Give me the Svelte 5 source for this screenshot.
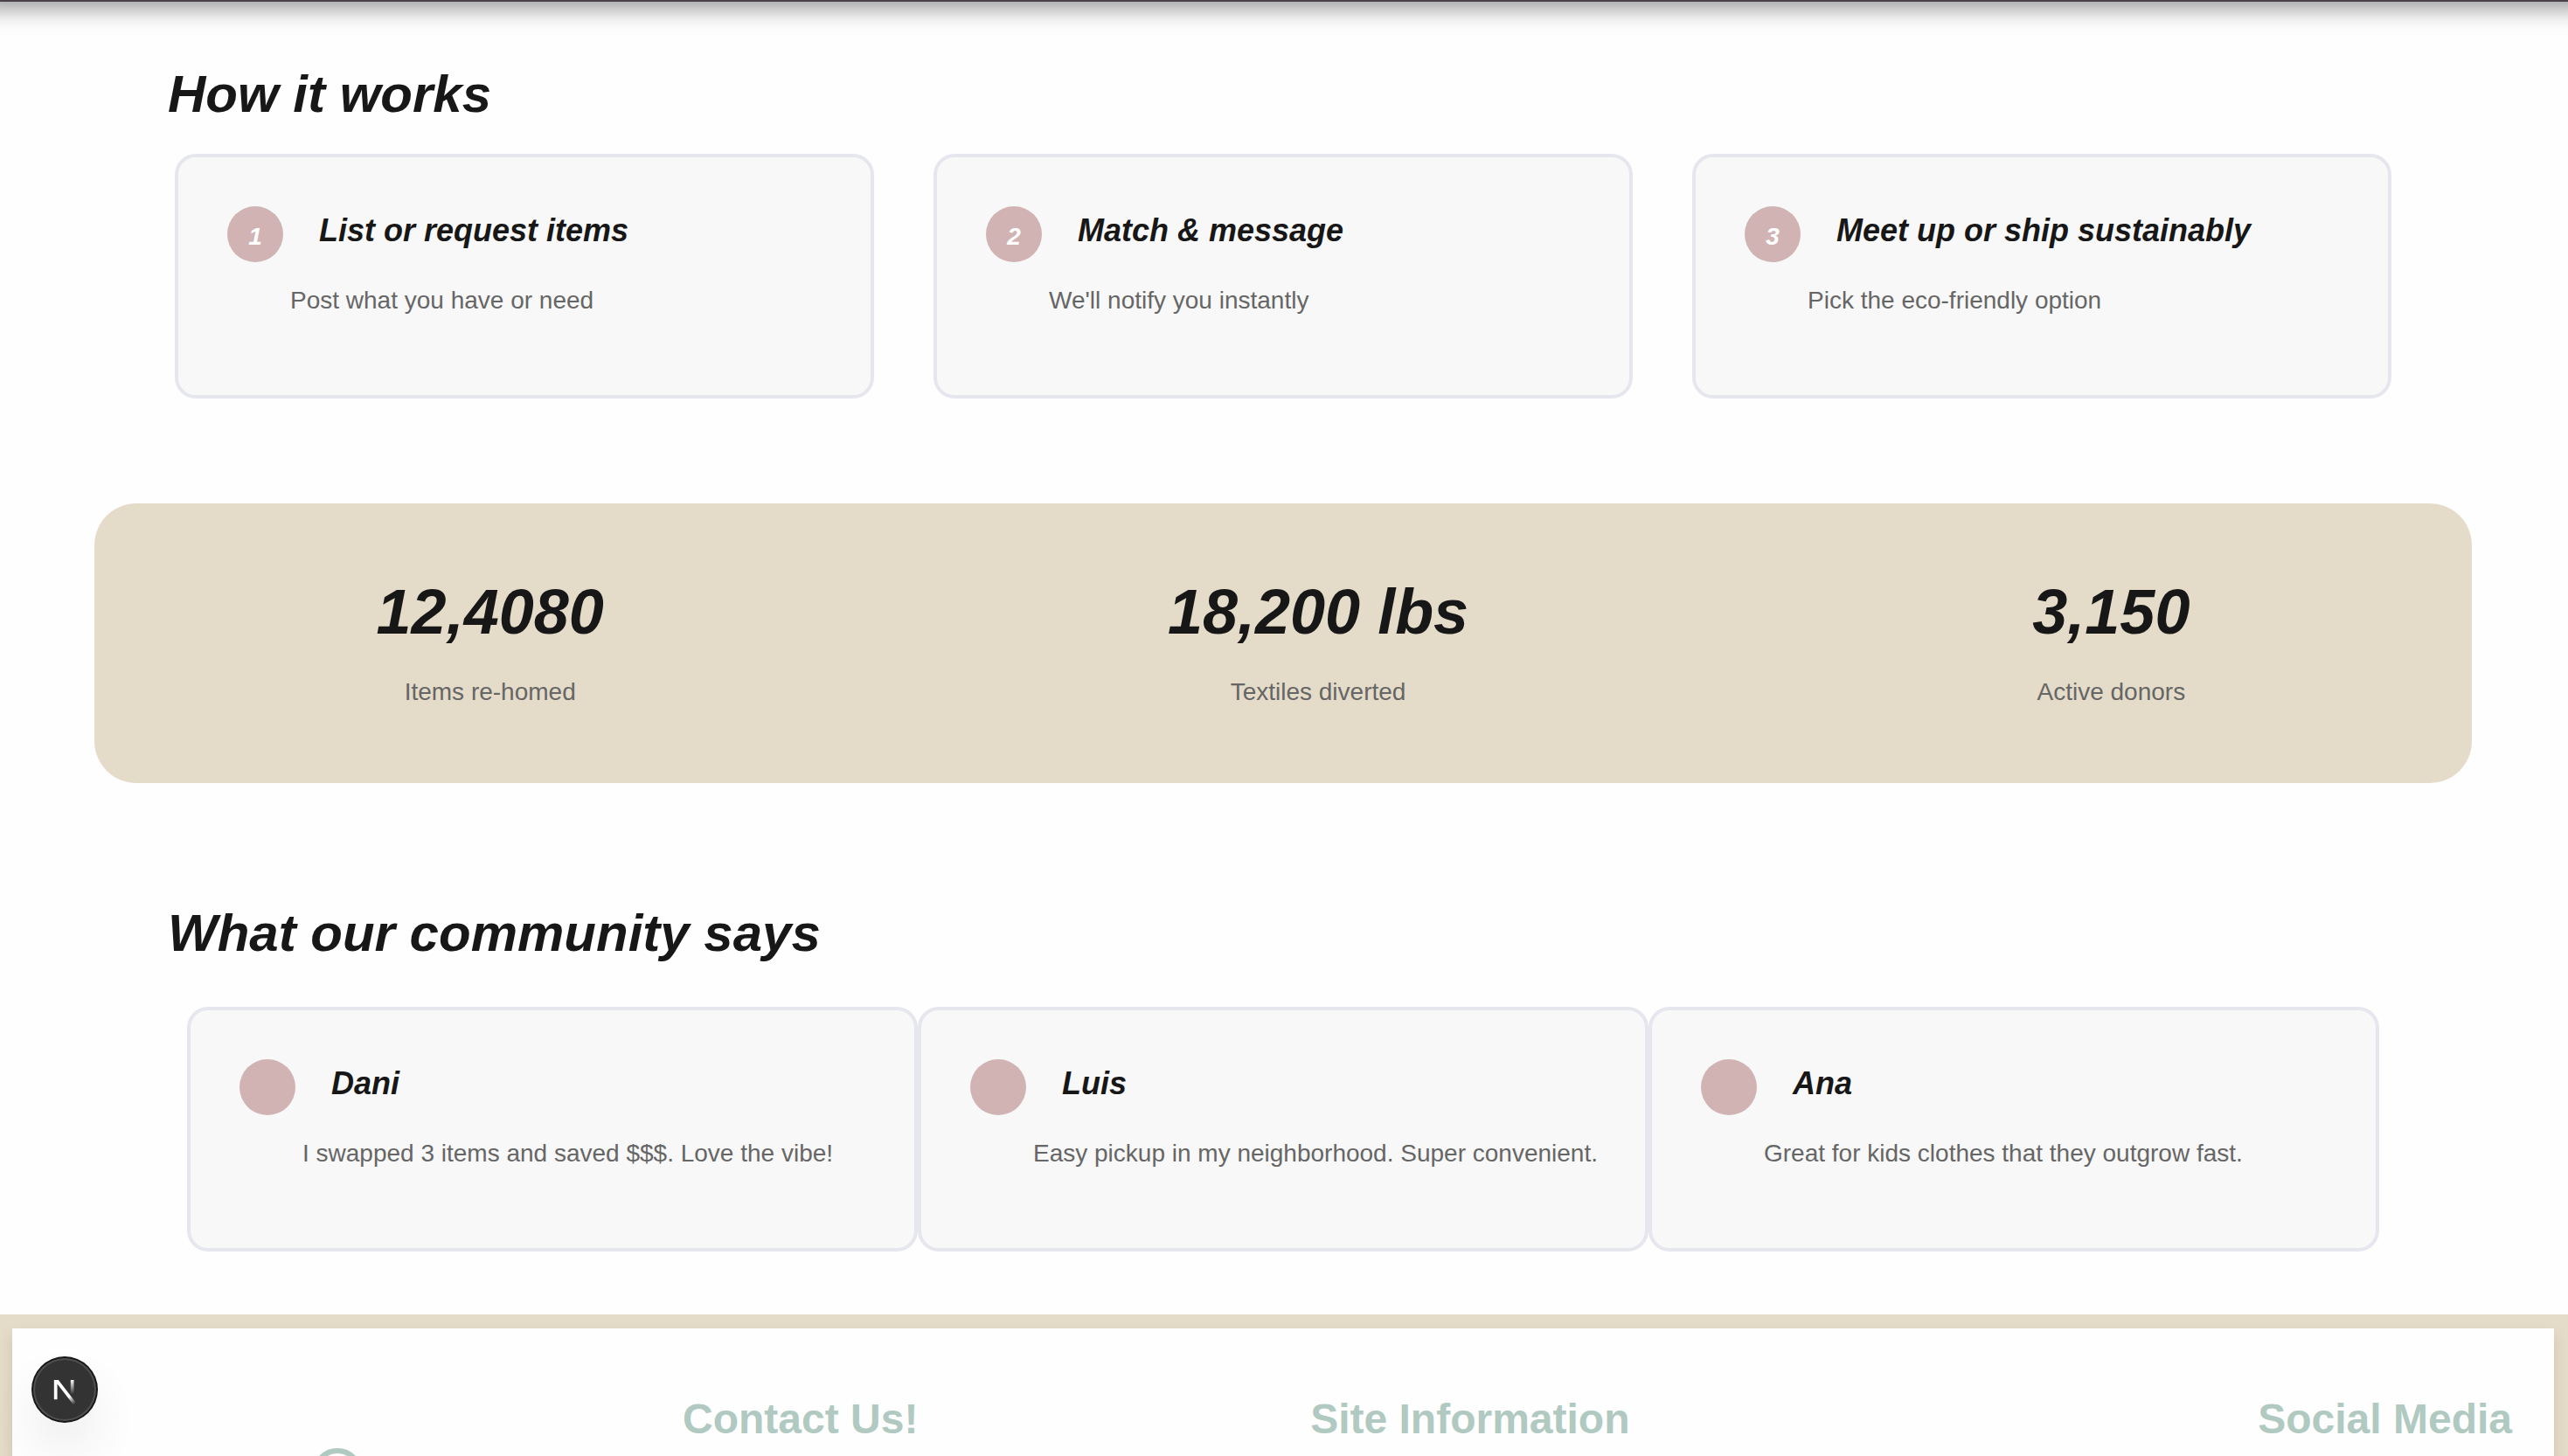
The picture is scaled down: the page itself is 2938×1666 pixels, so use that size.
<script>
  const steps = [
    { title: 'List or request items', text: 'Post what you have or need' },
    { title: 'Match & message', text: "We'll notify you instantly" },
    { title: 'Meet up or ship sustainably', text: 'Pick the eco-friendly option' }
  ];
  const stats = [
    { value: '12,4080', label: 'Items re-homed' },
    { value: '18,200 lbs', label: 'Textiles diverted' },
    { value: '3,150', label: 'Active donors' }
  ];
  const quotes = [
    { name: 'Dani', text: 'I swapped 3 items and saved $$$. Love the vibe!' },
    { name: 'Luis', text: 'Easy pickup in my neighborhood. Super convenient.' },
    { name: 'Ana', text: 'Great for kids clothes that they outgrow fast.' }
  ];
</script>

<div class="page">
  <header></header>

  <main>
    <section class="how">
      <h2>How it works</h2>
      <div class="cards spaced">
        {#each steps as step, i}
          <article class="card">
            <span class="dot">{i + 1}</span>
            <div class="copy">
              <h3>{step.title}</h3>
              <p>{step.text}</p>
            </div>
          </article>
        {/each}
      </div>
    </section>

    <section class="stats">
      {#each stats as stat}
        <div class="stat">
          <strong>{stat.value}</strong>
          <span>{stat.label}</span>
        </div>
      {/each}
    </section>

    <section class="community">
      <h2>What our community says</h2>
      <div class="cards joined">
        {#each quotes as quote}
          <article class="card">
            <span class="dot"></span>
            <div class="copy">
              <h3>{quote.name}</h3>
              <p>{quote.text}</p>
            </div>
          </article>
        {/each}
      </div>
    </section>
  </main>

  <footer>
    <div class="panel">
      <div class="brand">
        <svg width="58" height="58" viewBox="0 0 58 58" aria-hidden="true">
          <circle cx="29" cy="29" r="26" fill="none" stroke="#b0c9c1" stroke-width="6" />
        </svg>
      </div>
      <h4>Contact Us!</h4>
      <h4>Site Information</h4>
      <h4>Social Media</h4>
    </div>
  </footer>

  <button class="devtools" aria-label="Open Next.js Dev Tools">
    <svg width="40" height="40" viewBox="6 10 20 20" fill="none" aria-hidden="true">
      <defs>
        <linearGradient id="diag" x1="9.955" y1="11.1226" x2="15.4785" y2="17.9671" gradientUnits="userSpaceOnUse">
          <stop stop-color="#fff" />
          <stop offset="0.604072" stop-color="#fff" stop-opacity="0" />
          <stop offset="1" stop-color="#fff" stop-opacity="0" />
        </linearGradient>
        <linearGradient id="stem" x1="11.8222" y1="1.4" x2="11.791" y2="9.62542" gradientUnits="userSpaceOnUse">
          <stop stop-color="#fff" />
          <stop offset="1" stop-color="#fff" stop-opacity="0" />
        </linearGradient>
        <mask id="cut">
          <rect width="100%" height="100%" fill="white" />
          <rect width="5" height="1.5" fill="black" />
        </mask>
      </defs>
      <g transform="translate(8.5 13)">
        <path d="M13.3 15.2 L2.34 1 V12.6" stroke="url(#diag)" stroke-width="1.86" mask="url(#cut)" />
        <path d="M11.825 1.5 V13.1" stroke="url(#stem)" stroke-width="1.86" />
      </g>
    </svg>
  </button>
</div>

<style>
  :global(body) {
    background: #fefefe;
    overflow: hidden;
  }
  .page {
    height: 100vh;
    overflow: hidden;
    font-family: 'Liberation Sans', Arial, sans-serif;
    color: #171717;
  }
  h2, h3, h4, p {
    margin: 0;
  }
  /* The bar is scrolled almost fully out of view; its lower edge and shadow remain. */
  header {
    height: 160px;
    margin: -158px -24px 0;
    background: #4b4148;
    box-shadow: 0 8px 24px rgba(0, 0, 0, 0.4);
  }
  .how {
    padding: 70px 202px 0 200px;
  }
  h2 {
    margin-left: -8px;
    font-size: 60px;
    line-height: 72px;
    font-style: italic;
  }
  .cards {
    display: grid;
    grid-template-columns: repeat(3, minmax(0, 1fr));
  }
  .spaced {
    gap: 68px;
    margin-top: 32px;
  }
  .card {
    box-sizing: border-box;
    display: flex;
    min-height: 280px;
    padding: 56px;
    border: 4px solid #e6e6ef;
    border-radius: 24px;
    background: #f8f8f8;
  }
  .dot {
    box-sizing: border-box;
    flex: none;
    width: 64px;
    height: 64px;
    padding-top: 4px;
    border-radius: 50%;
    background: #d1b3b4;
    color: #fff;
    font-size: 28px;
    line-height: 62px;
    font-weight: bold;
    font-style: italic;
    text-align: center;
  }
  .copy {
    flex: 1;
    padding-left: 41px;
    white-space: nowrap;
  }
  h3 {
    padding-top: 4px;
    font-size: 36px;
    line-height: 48px;
    font-style: italic;
  }
  .copy p {
    margin: 36px 0 0 -33px;
    font-size: 28px;
    line-height: 40px;
    color: #666;
  }
  .stats {
    display: flex;
    justify-content: space-around;
    margin: 120px 110px 0 108px;
    padding: 80px 0;
    border-radius: 48px;
    background: #e4dbc8;
    text-align: center;
  }
  .stat {
    display: flex;
    flex-direction: column;
    gap: 32px;
    min-height: 160px;
  }
  .stat strong {
    font-size: 72px;
    line-height: 88px;
    font-style: italic;
  }
  .stat span {
    font-size: 28px;
    line-height: 32px;
    color: #666;
  }
  .community {
    padding: 136px 202px 72px 200px;
  }
  .joined {
    margin: 48px 14px 0;
  }
  footer {
    padding: 16px 16px 0 14px;
    background: #e4dbc8;
  }
  .panel {
    display: grid;
    grid-template-columns: 719fr 718fr 1084fr auto;
    min-height: 400px;
    padding: 76px 48px 0;
    background: #fefefe;
    box-shadow: 0 8px 16px rgba(0, 0, 0, 0.1);
  }
  .brand {
    padding: 61px 71px 0 0;
    text-align: center;
  }
  h4 {
    font-size: 48px;
    line-height: 56px;
    color: #b0c9c1;
  }
  .devtools {
    position: fixed;
    left: 38px;
    bottom: 40px;
    display: flex;
    align-items: center;
    justify-content: center;
    width: 72px;
    height: 72px;
    padding: 0;
    border: 0;
    border-radius: 50%;
    background: #333;
    box-shadow: 0 0 0 2px #171717, inset 0 0 0 2px rgba(255, 255, 255, 0.14), 0 32px 64px -16px rgba(0, 0, 0, 0.24);
  }
</style>
